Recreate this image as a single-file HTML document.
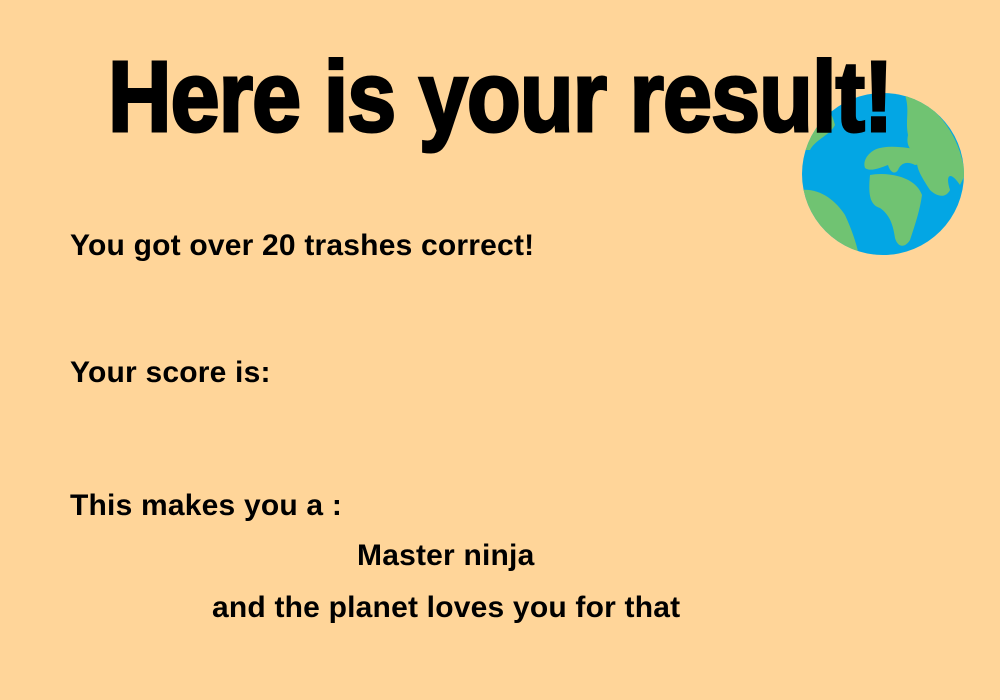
<!DOCTYPE html>
<html><head><style>
html,body{margin:0;padding:0}
body{width:1000px;height:700px;background:#FFD599;position:relative;overflow:hidden;font-family:"Liberation Sans",sans-serif;color:#000}
.t{position:absolute;white-space:nowrap;font-weight:bold;transform-origin:0 0;font-size:30px;letter-spacing:0.2px}
</style></head><body>
<svg style="position:absolute;left:0;top:0" width="1000" height="700">
<defs><clipPath id="c"><circle cx="883" cy="174" r="81"/></clipPath></defs>
<circle cx="883" cy="174" r="81" fill="#03A6E4"/>
<g clip-path="url(#c)" fill="#70C372">
<path d="M905 95 C930 100 960 130 965 175 L960 185 C950 170 945 175 950 190 C945 200 935 195 930 190 C920 175 915 165 918 160 C915 150 905 150 908 135 C905 120 910 110 905 95Z"/>
<path d="M880 148 C895 145 905 148 925 150 C930 160 920 165 915 165 C905 160 900 165 898 170 C895 175 890 172 888 165 C880 168 870 172 865 168 C862 160 870 150 880 148Z"/>
<path d="M870 175 C885 172 915 175 922 195 C920 210 915 225 910 240 C905 248 898 248 895 238 C893 225 890 215 880 208 C870 205 868 195 870 175Z"/>
<path d="M800 190 C820 188 835 200 845 215 C852 230 857 245 860 260 L800 260Z"/>
<path d="M805 110 C820 100 830 105 835 125 C830 135 815 140 810 150 L800 150Z"/>
</g>
</svg>
<div class="t" style="left:108px;top:40px;font-size:100px;letter-spacing:-1px;transform:scaleX(0.88);-webkit-text-stroke:3px #000">Here is your result!</div>
<div class="t" style="left:70px;top:229px">You got over 20 trashes correct!</div>
<div class="t" style="left:70px;top:356px">Your score is:</div>
<div class="t" style="left:70px;top:489px">This makes you a :</div>
<div class="t" style="left:357px;top:539px">Master ninja</div>
<div class="t" style="left:212px;top:591px">and the planet loves you for that</div>
</body></html>
